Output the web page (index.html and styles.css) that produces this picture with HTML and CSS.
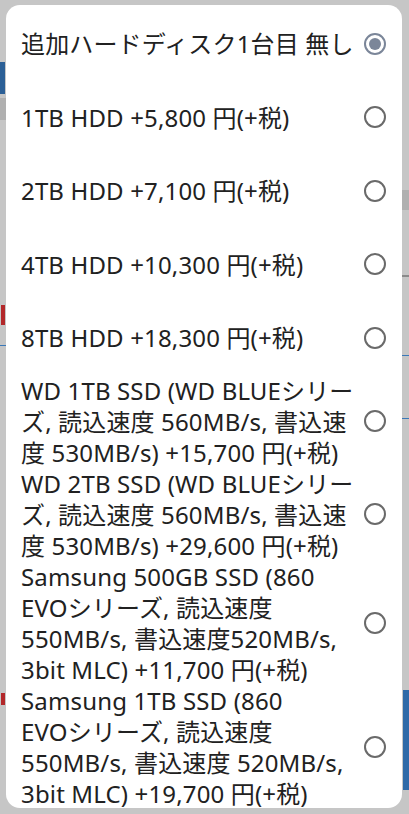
FILE: index.html
```html
<!DOCTYPE html>
<html lang="ja">
<head>
<meta charset="utf-8">
<link rel="stylesheet" href="styles.css">
</head>
<body>
<div class="dialog">
  <ul class="list">
    <li class="item"><span class="label">追加ハードディスク1台目 無し</span><span class="radio checked"></span></li>
    <li class="item"><span class="label">1TB HDD +5,800 円(+税)</span><span class="radio"></span></li>
    <li class="item"><span class="label">2TB HDD +7,100 円(+税)</span><span class="radio"></span></li>
    <li class="item"><span class="label">4TB HDD +10,300 円(+税)</span><span class="radio"></span></li>
    <li class="item"><span class="label">8TB HDD +18,300 円(+税)</span><span class="radio"></span></li>
    <li class="item"><span class="label">WD 1TB SSD (WD BLUEシリー<br>ズ, 読込速度 560MB/s, 書込速<br>度 530MB/s) +15,700 円(+税)</span><span class="radio"></span></li>
    <li class="item"><span class="label">WD 2TB SSD (WD BLUEシリー<br>ズ, 読込速度 560MB/s, 書込速<br>度 530MB/s) +29,600 円(+税)</span><span class="radio"></span></li>
    <li class="item"><span class="label">Samsung 500GB SSD (860<br>EVOシリーズ, 読込速度<br>550MB/s, 書込速度520MB/s,<br>3bit MLC) +11,700 円(+税)</span><span class="radio"></span></li>
    <li class="item"><span class="label">Samsung 1TB SSD (860<br>EVOシリーズ, 読込速度<br>550MB/s, 書込速度 520MB/s,<br>3bit MLC) +19,700 円(+税)</span><span class="radio"></span></li>
  </ul>
</div>
</body>
</html>
```
FILE: styles.css
```css
html, body {
  height: 100%;
}
body {
  margin: 0;
  padding: 5px 7px 0 6px;
  box-sizing: border-box;
  background-color: #c6c6c6;
  background-image:
    linear-gradient(#2b5f96, #2b5f96),
    linear-gradient(#b0b0b0, #b0b0b0),
    linear-gradient(#b3282a, #b3282a),
    linear-gradient(#3a78b8, #3a78b8),
    linear-gradient(#b3282a, #b3282a),
    linear-gradient(#b0b0b0, #b0b0b0),
    linear-gradient(#3a78b8, #3a78b8),
    linear-gradient(#3a78b8, #3a78b8),
    linear-gradient(#2f6aa8, #2f6aa8),
    linear-gradient(#8a8a8a, #8a8a8a);
  background-size:
    5px 32px,
    6px 22px,
    4px 20px,
    6px 1px,
    4px 12px,
    7px 20px,
    7px 1px,
    7px 1px,
    6px 100px,
    7px 2px;
  background-position:
    0 62px,
    0 98px,
    1px 305px,
    0 345px,
    1px 693px,
    402px 190px,
    402px 355px,
    402px 418px,
    403px 690px,
    402px 275px;
  background-repeat: no-repeat;
  font-family: "Noto Sans", "Noto Sans CJK JP", sans-serif;
  overflow: hidden;
}
.dialog {
  background: #ffffff;
  height: 803px;
  border-radius: 14px;
  overflow: hidden;
}
.list {
  list-style: none;
  margin: 0;
  padding: 2px 0 0 0;
}
.item {
  display: flex;
  align-items: center;
  min-height: 73.5px;
  padding-left: 15px;
}
.label {
  flex: 1;
  font-size: 24px;
  line-height: 31px;
  letter-spacing: 0.15px;
  white-space: nowrap;
  color: #212121;
}
.radio {
  flex: none;
  width: 22px;
  height: 22px;
  box-sizing: border-box;
  border: 2px solid #6a6a6a;
  border-radius: 50%;
  margin: 0 16px 0 8px;
  display: flex;
  align-items: center;
  justify-content: center;
}
.radio.checked {
  border-color: #7b8699;
}
.radio.checked::after {
  content: "";
  width: 12px;
  height: 12px;
  border-radius: 50%;
  background: #7b8699;
}
```
